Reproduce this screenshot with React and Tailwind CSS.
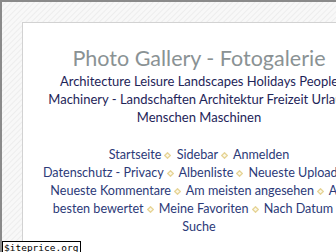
import React from "react";

const Sep = () => (
  <svg width="7" height="7" viewBox="0 0 8 8" className="inline-block ml-[3px] mr-[2px] align-[0px]">
    <path d="M4 0.8 L7.2 4 L4 7.2 L0.8 4 Z" fill="#fbf7e6" stroke="#e6d496" strokeWidth="1.4" />
  </svg>
);

const Item = ({ children, last }) => (
  <span className="whitespace-nowrap">
    <span className="text-[#2c3a78]">{children}</span>
    {!last && <Sep />}
  </span>
);

export default function App() {
  return (
    <div className="relative w-[336px] h-[252px] overflow-hidden border-t-2 border-l-2 border-[#8a8a8a] bg-[repeating-linear-gradient(135deg,#f8f8f8_0px,#f8f8f8_2px,#ededed_3px,#f8f8f8_4px)] font-['Lato','DejaVu_Sans',sans-serif]">
      <div className="mt-[20px] ml-[20px] w-[354px] h-[300px] bg-white border border-[#d2d2d2] px-[11px] pt-[21px]">
        <div className="text-center text-[21.5px] leading-[28px] text-[#8a9294]">Photo Gallery - Fotogalerie</div>
        <div className="text-center text-[13px] leading-[18px] text-[#1e2458]">
          Architecture Leisure Landscapes Holidays People Machinery - Landschaften Architektur Freizeit Urlaub Menschen Maschinen
        </div>
        <div className="mt-[20px] px-[4px] text-center text-[12.6px] leading-[18px]">
          <Item>Startseite</Item> <Item>Sidebar</Item> <Item last>Anmelden</Item>
          <br />
          <Item>Datenschutz - Privacy</Item> <Item>Albenliste</Item> <Item>Neueste Uploads</Item> <Item>Neueste Kommentare</Item> <Item>Am meisten angesehen</Item> <span className="text-[#2c3a78]">Am</span> <Item>besten bewertet</Item> <Item>Meine Favoriten</Item> <Item>Nach Datum</Item> <Item last>Suche</Item>
        </div>
      </div>
      <div className="absolute left-0 top-[239px] h-[13px] pl-[1px] pr-[2px] bg-white border border-black text-[9.5px] leading-[11px] text-black font-['DejaVu_Sans_Mono','Liberation_Mono',monospace]">
        $iteprice.org
      </div>
    </div>
  );
}
